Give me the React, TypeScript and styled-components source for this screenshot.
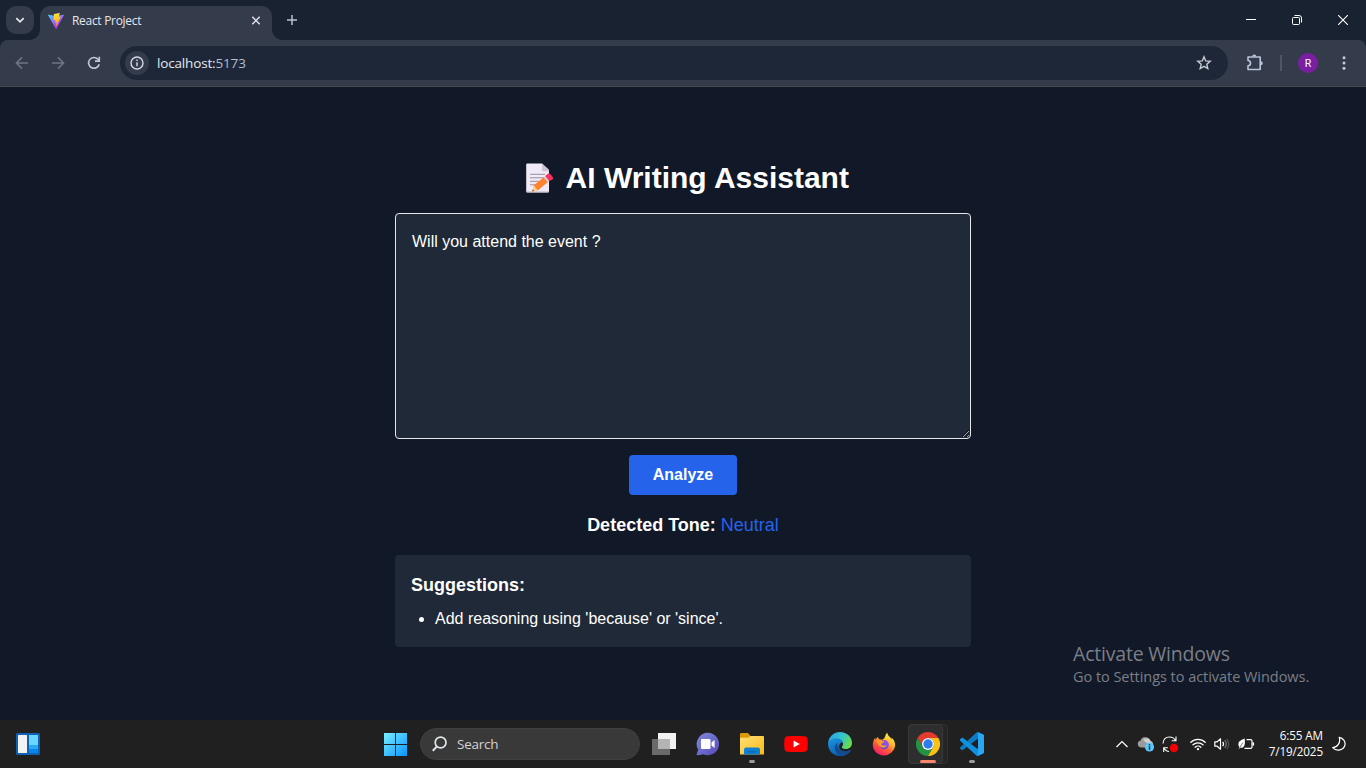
import React from "react";
import styled, { createGlobalStyle } from "styled-components";

const GlobalStyle = createGlobalStyle`
  * { box-sizing: border-box; }
  body { margin: 0; background: #111827; overflow: hidden; }
  svg { display: block; flex: none; }
`;

const ui = `"Open Sans", "Noto Sans", sans-serif`;
const sans = `"Liberation Sans", Arial, sans-serif`;

const Screen = styled.div`
  position: relative;
  display: flex;
  flex-direction: column;
  width: 1366px;
  height: 768px;
  font-family: ${ui};
`;

/* Browser frame */
const TabStrip = styled.header`
  display: flex;
  height: 40px;
  padding-left: 6px;
  background: #192230;
`;

const TabSearch = styled.button`
  display: grid;
  place-items: center;
  width: 28px;
  height: 28px;
  margin: 6px 6px 0 0;
  padding: 0;
  border: 0;
  border-radius: 10px;
  background: #343b4b;
`;

const Tab = styled.div`
  position: relative;
  display: flex;
  align-items: center;
  width: 232px;
  height: 34px;
  margin-top: 6px;
  padding: 0 10px 5px 8px;
  border-radius: 10px 10px 0 0;
  background: #343b4b;
  &::before,
  &::after {
    content: "";
    position: absolute;
    bottom: 0;
    width: 10px;
    height: 10px;
  }
  &::before {
    right: 100%;
    background: radial-gradient(circle at 0 0, transparent 9.5px, #343b4b 10px);
  }
  &::after {
    left: 100%;
    background: radial-gradient(circle at 100% 0, transparent 9.5px, #343b4b 10px);
  }
`;

const TabTitle = styled.span`
  flex: 1;
  margin-left: 8px;
  color: #e3e6ee;
  font-size: 12px;
  line-height: 16px;
  letter-spacing: -0.3px;
`;

const NewTab = styled.div`
  display: grid;
  place-items: center;
  width: 28px;
  margin-left: 6px;
`;

const WindowControls = styled.div`
  display: flex;
  margin-left: auto;
`;

const WindowButton = styled.div`
  display: grid;
  place-items: center;
  width: 46px;
  height: 40px;
`;

const ToolbarBack = styled.div`
  background: #192230;
`;

const Toolbar = styled.nav`
  display: flex;
  align-items: center;
  height: 47px;
  padding: 0 4px;
  border-bottom: 1px solid #484a50;
  border-radius: 8px 8px 0 0;
  background: #343b4b;
`;

const ToolButton = styled.div<{ $w?: number }>`
  display: grid;
  flex: none;
  place-items: center;
  width: ${(p) => p.$w ?? 36}px;
  height: 34px;
`;

const AddressBar = styled.div`
  display: flex;
  flex: none;
  align-items: center;
  width: 1108px;
  height: 34px;
  margin-left: 8px;
  padding: 0 16px 0 5px;
  border-radius: 17px;
  background: #1e2737;
`;

const SiteInfo = styled.div`
  display: grid;
  place-items: center;
  width: 24px;
  height: 24px;
  border-radius: 50%;
  background: #343b4b;
`;

const Address = styled.span`
  flex: 1;
  margin-left: 8px;
  color: #e6e8ee;
  font-size: 13.5px;
  letter-spacing: -0.16px;
`;

const Port = styled.span`
  color: #b4bccd;
`;

const Divider = styled.i`
  flex: none;
  width: 2px;
  height: 16px;
  margin-left: -2px;
  background: #4d5567;
`;

const Avatar = styled.div`
  display: grid;
  flex: none;
  place-items: center;
  width: 20px;
  height: 20px;
  margin: 0 8px 0 16px;
  border-radius: 50%;
  background: #7b1fa2;
  color: #fff;
  font: 400 10.5px Roboto, sans-serif;
`;

/* Web page */
const Page = styled.main`
  display: flex;
  flex: 1;
  flex-direction: column;
  align-items: center;
  padding-top: 73px;
  background: #111827;
  color: #fff;
  font-family: ${sans};
`;

const Title = styled.h1`
  display: flex;
  align-items: center;
  gap: 7.5px;
  margin: 0 0 17px;
  font-size: 30px;
  line-height: 36px;
`;

const Editor = styled.textarea`
  width: 576px;
  height: 226px;
  padding: 16px;
  border: 1px solid #e5e7eb;
  border-radius: 4px;
  outline: 0;
  background: #1f2937;
  color: #fff;
  font: 16px/24px ${sans};
`;

const AnalyzeButton = styled.button`
  width: 108px;
  height: 40px;
  margin-top: 16px;
  padding: 0;
  border: 0;
  border-radius: 4px;
  background: #2563eb;
  color: #fff;
  font: bold 16px/24px ${sans};
`;

const Tone = styled.p`
  margin: 16px 0;
  font-size: 18px;
  line-height: 28px;
`;

const ToneValue = styled.span`
  color: #2563eb;
`;

const Suggestions = styled.section`
  width: 576px;
  height: 92px;
  padding: 16px;
  border-radius: 4px;
  background: #1f2937;
`;

const SuggestionsTitle = styled.h2`
  margin: 0 0 8px;
  font-size: 18px;
  line-height: 28px;
`;

const SuggestionList = styled.ul`
  margin: 0;
  padding-left: 24px;
  font-size: 16px;
  line-height: 24px;
`;

const Watermark = styled.aside`
  position: absolute;
  top: 641px;
  left: 1073px;
  color: #7b7f87;
  white-space: nowrap;
`;

const WatermarkTitle = styled.div`
  font-size: 19.5px;
  line-height: 26px;
  letter-spacing: -0.2px;
`;

const WatermarkText = styled.div`
  font-size: 14.5px;
  line-height: 20px;
  letter-spacing: -0.04px;
`;

/* Taskbar */
const Taskbar = styled.footer`
  display: grid;
  grid-template-columns: 373px auto 1fr;
  height: 48px;
  background: #202020;
`;

const Widgets = styled.div`
  display: flex;
  align-items: center;
  padding-left: 16px;
`;

const AppRow = styled.div`
  display: flex;
`;

const AppSlot = styled.div`
  position: relative;
  display: grid;
  place-items: center;
  width: 44px;
  height: 48px;
  & > svg { position: relative; }
`;

const ActivePlate = styled.div`
  position: absolute;
  top: 4px;
  left: 2px;
  width: 35px;
  height: 40px;
  border: 1px solid #383838;
  border-radius: 4px;
  background: #2e2e2e;
`;

const StackedPlate = styled(ActivePlate)`
  width: 40px;
  border-color: #303030;
  background: #252525;
`;

const Indicator = styled.i<{ $active?: boolean }>`
  position: absolute;
  bottom: 5px;
  left: ${(p) => (p.$active ? 14 : 19)}px;
  width: ${(p) => (p.$active ? 16 : 6)}px;
  height: 3px;
  border-radius: 2px;
  background: ${(p) => (p.$active ? "#fa866b" : "#9b9b9b")};
`;

const SearchBox = styled.div`
  display: flex;
  align-items: center;
  width: 220px;
  height: 32px;
  margin: 8px 2px 0 3px;
  padding-left: 11px;
  border: 1px solid #404040;
  border-radius: 16px;
  background: #393939;
  color: #d2d2d2;
  font-size: 13.5px;
  letter-spacing: -0.25px;
  gap: 10px;
`;

const Tray = styled.div`
  display: flex;
  align-items: center;
  justify-content: flex-end;
  padding-right: 11px;
`;

const TrayIcon = styled.div<{ $w?: number; $gap?: number }>`
  display: grid;
  place-items: center;
  width: ${(p) => p.$w ?? 24}px;
  margin-left: ${(p) => p.$gap ?? 0}px;
`;

const Clock = styled.div`
  width: 65px;
  padding-bottom: 2px;
  color: #fff;
  font-size: 11.7px;
  line-height: 16px;
  letter-spacing: -0.12px;
  text-align: right;
  white-space: nowrap;
`;

const ViteLogo = () => (
  <svg width="16" height="16" viewBox="0 0 256 257">
    <defs>
      <linearGradient id="viteV" x1="0" x2=".58" y1="0" y2=".79">
        <stop stopColor="#41d1ff" />
        <stop offset="1" stopColor="#bd34fe" />
      </linearGradient>
      <linearGradient id="viteBolt" x1=".4" x2=".5" y1="0" y2=".9">
        <stop stopColor="#ffea83" />
        <stop offset=".1" stopColor="#ffdd35" />
        <stop offset="1" stopColor="#ffa800" />
      </linearGradient>
    </defs>
    <path fill="url(#viteV)" d="M255.153 37.938L134.897 252.976c-2.483 4.44-8.862 4.466-11.382.048L.875 37.958c-2.746-4.814 1.371-10.646 6.827-9.67l120.385 21.517a6.537 6.537 0 0 0 2.322-.004l117.867-21.483c5.438-.991 9.574 4.796 6.877 9.62Z" />
    <path fill="url(#viteBolt)" d="M185.432.063L96.44 17.501a3.268 3.268 0 0 0-2.634 3.014l-5.474 92.456a3.268 3.268 0 0 0 3.997 3.378l24.777-5.718c2.318-.535 4.413 1.507 3.936 3.838l-7.361 36.047c-.495 2.426 1.782 4.5 4.151 3.78l15.304-4.649c2.372-.72 4.652 1.36 4.15 3.788l-11.698 56.621c-.732 3.542 3.979 5.473 5.943 2.437l1.313-2.028l72.516-144.72c1.215-2.423-.88-5.186-3.54-4.672l-25.505 4.922c-2.396.462-4.435-1.77-3.759-4.114l16.646-57.705c.677-2.35-1.37-4.583-3.769-4.113Z" />
  </svg>
);

const Arrow = ({ flip }: { flip?: boolean }) => (
  <svg width="14" height="14" viewBox="0 0 14 14" fill="none" stroke="#6f7686" strokeWidth="1.5">
    <path d={flip ? "M1 7h11.5M7 1.4 12.6 7 7 12.6" : "M13 7H1.5M7 1.4 1.4 7 7 12.6"} />
  </svg>
);

const MemoEmoji = () => (
  <svg width="41" height="32" viewBox="0 0 41 32">
    <path d="M10.4 1.500h14.600L32 8v21.300a1.200 1.200 0 0 1-1.200 1.200H10.400a1.200 1.200 0 0 1-1.200-1.200V2.700a1.200 1.200 0 0 1 1.200-1.200Z" fill="#f0eaf6" />
    <path d="M25 1.500 32 8v1.300h-5.500A1.500 1.500 0 0 1 25 7.800Z" fill="#cdc2d9" />
    <path d="M9.200 29.500H32a1.200 1.200 0 0 1-1.200 1H10.300a1.200 1.200 0 0 1-1.100-1Z" fill="#b9b1c4" />
    <g stroke="#998ea4" strokeWidth="1">
      <path d="M13 12.300h15M13 15.800h14M13 19.300h9M13 22.800h6" />
    </g>
    <path d="m16.600 23.500 10.100-8.200 4 5-10.100 8.200Z" fill="#ff822d" />
    <path d="m16.600 23.500 4 5-5.300 1Z" fill="#ffce7c" />
    <path d="m15.800 27.500 1.200 1.600-1.700.400Z" fill="#4c2b3c" />
    <path d="m26.700 15.300 1.500-1.300 4 5-1.500 1.300Z" fill="#d3c9dc" />
    <path d="m28.200 14 2.700-2.200c.8-.6 1.800-.5 2.400.300l2.500 3.100c.6.800.4 1.700-.3 2.200L32.200 19Z" fill="#f8315f" />
  </svg>
);

const WidgetsIcon = () => (
  <svg width="24" height="22" viewBox="0 0 24 22">
    <rect width="24" height="22" rx="1.5" fill="#0f62b3" />
    <rect x="2" y="2" width="9" height="18" rx=".6" fill="#f2f2f2" />
    <path fill="#69d6ff" d="M13 2h9v10h-9z" />
    <path fill="#27a9f5" d="M13 12h9v4h-9z" />
    <path fill="#0786ef" d="M13 16h9v4h-9z" />
  </svg>
);

const StartIcon = () => (
  <svg width="24" height="24" viewBox="0 0 24 24">
    <linearGradient id="win" x1="0" y1="0" x2="24" y2="24" gradientUnits="userSpaceOnUse">
      <stop stopColor="#7df3ff" />
      <stop offset="1" stopColor="#0795ff" />
    </linearGradient>
    <path fill="url(#win)" d="M1 1h11v11H1zM13 1h11v11H13zM1 13h11v11H1zM13 13h11v11H13z" />
  </svg>
);

const SearchIcon = () => (
  <svg width="15" height="16" viewBox="0 0 15 16" fill="none" stroke="#e2e6e8" strokeWidth="1.700">
    <circle cx="8.600" cy="6.500" r="5.400" />
    <path d="M5 10.400.8 14.700" strokeWidth="2" />
  </svg>
);

const TaskViewIcon = () => (
  <svg width="24" height="24" viewBox="0 0 24 24">
    <path fill="#f2f2f2" d="M6 1h18v16H6z" />
    <path fill="#6a6a6a" d="M0 7h18v16H0z" />
    <path fill="#b4b4b4" d="M6 7h12v10H6z" />
  </svg>
);

const ChatIcon = () => (
  <svg width="24" height="24" viewBox="0 0 24 24">
    <linearGradient id="chat" x1="0" y1="0" x2="1" y2="1">
      <stop stopColor="#897bd6" />
      <stop offset=".35" stopColor="#6f78cf" />
      <stop offset="1" stopColor="#5b45bd" />
    </linearGradient>
    <path fill="url(#chat)" d="M12 .8a11.2 11.2 0 1 1-4.800 21.400c-1.700.5-3.800 1-5.900 1.100-.6 0-.9-.5-.7-1l1.600-4.600A11.200 11.200 0 0 1 12 .8Z" />
    <rect x="5" y="7" width="9.500" height="10" rx="1" fill="#fff" />
    <path d="m15.500 10.600 2.300-2.200c.4-.4.8-.2.8.3v6.600c0 .5-.4.7-.8.3L15.500 13.400Z" fill="#fff" />
  </svg>
);

const FolderIcon = () => (
  <svg width="24" height="24" viewBox="0 0 24 24">
    <linearGradient id="fold" x1="0" y1="0" x2="1" y2="1">
      <stop stopColor="#ffe07a" />
      <stop offset="1" stopColor="#fbb912" />
    </linearGradient>
    <path fill="#dd9a06" d="M0 2.500C0 1.700.5 1 1.300 1H8l2.500 3H22v6H0Z" />
    <path fill="url(#fold)" d="M0 5.800h8L10.500 4H23a1 1 0 0 1 1 1v17.500H0Z" />
    <path fill="#0e7fd3" d="M4 22.500v-4.800A2.200 2.200 0 0 1 6.200 15.500h11.600a2.200 2.200 0 0 1 2.200 2.200v4.800Z" />
    <path stroke="#0a68b4" strokeWidth="1.300" d="M7.500 19.800h9" />
  </svg>
);

const YouTubeIcon = () => (
  <svg width="24" height="24" viewBox="0 0 24 24">
    <path fill="#f00" d="M3.500 4.300c4.500-.5 12.500-.5 17 0 1.800.2 2.800 1.200 3 3 .4 3 .4 6.400 0 9.400-.2 1.800-1.200 2.800-3 3-4.500.5-12.500.5-17 0-1.800-.2-2.800-1.200-3-3-.4-3-.4-6.400 0-9.400.2-1.800 1.200-2.800 3-3Z" />
    <path fill="#fff" d="m9.600 8.500 6.200 3.500-6.200 3.500Z" />
  </svg>
);

const EdgeIcon = () => (
  <svg width="24" height="24" viewBox="0 0 24 24">
    <defs>
      <linearGradient id="edgeTop" x1="0" y1=".2" x2="1" y2=".6">
        <stop stopColor="#2da4e8" />
        <stop offset=".5" stopColor="#31c4cf" />
        <stop offset="1" stopColor="#69dd49" />
      </linearGradient>
      <linearGradient id="edgeBody" x1="0" y1="0" x2=".5" y2="1">
        <stop stopColor="#1b9ae1" />
        <stop offset="1" stopColor="#0a5cb0" />
      </linearGradient>
    </defs>
    <path fill="url(#edgeBody)" d="M.1 11C.7 7.300 4.300 5.500 8.200 5.500c4 0 7 2 7.200 5.200-4-1.200-7 5.500-1.200 8 3 1.300 6 .6 8-.7.500-.3.900.1.600.6A12 12 0 0 1 12 24C5 24-.5 18.500.1 11Z" />
    <path fill="#124c8c" d="M9.200 10.800c-4.500 3.200-2.500 12 4.600 13 3.700-.2 6.900-2.200 8.900-5 .3-.600-.1-1-.6-.700-2.400 1.300-5 1.700-7.700.8-4.800-1.600-5-5.700-5.200-8.100Z" />
    <path fill="url(#edgeTop)" d="M.1 11C.8 4.500 6 0 12 0c7 0 12 5 12 11 0 3.800-2.700 6-6 6-3.500 0-4.500-1.300-4.100-2 2.500-3.500 1-8.500-5.500-8.800C4 6 .9 8.200.1 11Z" />
  </svg>
);

const FirefoxIcon = () => (
  <svg width="24" height="24" viewBox="0 0 24 24">
    <defs>
      <linearGradient id="foxBody" x1=".8" y1=".05" x2=".25" y2="1">
        <stop stopColor="#fff44f" />
        <stop offset=".35" stopColor="#ffb52b" />
        <stop offset=".62" stopColor="#ff5b36" />
        <stop offset="1" stopColor="#f5156c" />
      </linearGradient>
      <linearGradient id="foxGlobe" x1="1" y1="0" x2="0" y2="1">
        <stop stopColor="#a557f5" />
        <stop offset="1" stopColor="#5746ce" />
      </linearGradient>
    </defs>
    <path fill="url(#foxBody)" d="M15.300.8c.2 2.300 1.700 3.300 3 4.700.9 1 1 1.200 1.300 1.900.2-.7.2-1.300 0-2 2.400 2 3.600 5 3.600 8A11.200 11.200 0 0 1 12 23.500C5.700 23.500.8 18.800.8 12.800c0-2.800 1-5.500 2.500-7.300v2.200L6 4.700c.1 1.300.6 2 1.300 2.600l3 .4c1.200-.6 2.100-1.700 2.700-3 .5-1.300 1-2.900 2.300-3.900Z" />
    <circle cx="12.200" cy="12.700" r="4.700" fill="url(#foxGlobe)" />
    <path fill="#ff9a29" d="M4 9.300c2-1.700 4-1.500 6-.3l2.300.4c-.3 1.200-1.500 1.500-2.700 2.100-.5 1 .2 1.700 1.200 2 1.500.4 2.300-.7 3.700.2-1 1.500-2.600 2.300-4.200 1.900-2.600-.6-4.200-2.800-6.300-6.300Z" />
  </svg>
);

const ChromeIcon = () => (
  <svg width="24" height="24" viewBox="0 0 48 48">
    <path fill="#e33b2e" d="M24 12H44.800A24 24 0 0 0 3.200 12L13.600 30A12 12 0 0 1 24 12Z" />
    <path fill="#229342" d="M13.600 30 3.200 12A24 24 0 0 0 24 48L34.400 30A12 12 0 0 1 13.600 30Z" />
    <path fill="#fbc116" d="M34.400 30 24 48A24 24 0 0 0 44.800 12H24A12 12 0 0 1 34.400 30Z" />
    <circle cx="24" cy="24" r="12" fill="#fff" />
    <circle cx="24" cy="24" r="9.400" fill="#2f7cf0" />
  </svg>
);

const CodeIcon = () => (
  <svg width="24" height="24" viewBox="0 0 24 24">
    <path fill="#0b7cc4" d="M23.150 2.587L18.210.21a1.494 1.494 0 0 0-1.705.29l-9.460 8.630-4.120-3.128a.999.999 0 0 0-1.276.057L.327 7.261A1 1 0 0 0 .326 8.740L3.899 12 .326 15.260a1 1 0 0 0 .001 1.479L1.650 17.940a.999.999 0 0 0 1.276.057l4.120-3.128 9.460 8.630a1.492 1.492 0 0 0 1.704.290l4.942-2.377A1.500 1.500 0 0 0 24 20.060V3.939a1.500 1.500 0 0 0-.850-1.352zm-5.146 14.861L10.826 12l7.178-5.448v10.896z" />
    <path fill="#2aa7f2" d="m18 .2 5.150 2.387A1.500 1.500 0 0 1 24 3.939V20.060a1.500 1.500 0 0 1-.850 1.352L18 23.800Z" />
    <path fill="#1190dc" d="m2.900 6 15.100 11.450V23.800c-.5.1-1.100-.1-1.500-.3L.3 8.700c-.4-.4-.4-1 0-1.400L1.650 6a1 1 0 0 1 1.250 0Z" />
  </svg>
);

const CloudIcon = () => (
  <svg width="18" height="16" viewBox="0 0 18 16">
    <path fill="#9b9b9b" d="M4 11.500a3.600 3.600 0 0 1-.4-7.100A5.300 5.300 0 0 1 13.600 5 3.400 3.400 0 0 1 14 11.500Z" />
    <path fill="#d0d0d0" d="M6 3.500a5.300 5.300 0 0 1 7.600 1.500 3.500 3.500 0 0 1 2 3.500L9 6.500Z" />
    <circle cx="12.500" cy="11" r="4.600" fill="#5ac8fa" />
    <path stroke="#173a52" strokeWidth="1.500" d="M12.500 10.300v3.400M12.500 8.100v1.300" />
  </svg>
);

const SyncIcon = () => (
  <svg width="18" height="18" viewBox="0 0 18 18" fill="none" stroke="#fff" strokeWidth="1.100">
    <path d="M2 8.500C2.300 4.500 5 2 8.500 2c2.600 0 4.800 1.300 6 3.500M15 1.500v4.200h-4.200M2.700 17v-4.200h4.200M2.700 12.800C4 15 5.500 16.500 8 16.500" />
    <circle cx="13" cy="13" r="4.200" fill="#f50000" stroke="none" />
  </svg>
);

const WifiIcon = () => (
  <svg width="16" height="14" viewBox="0 0 16 14" fill="none" stroke="#fff" strokeWidth="1.300" strokeLinecap="round">
    <path d="M.8 5.300a10.300 10.300 0 0 1 14.400 0M3 7.800a7.200 7.200 0 0 1 10 0M5.200 10.200a4 4 0 0 1 5.600 0" />
    <circle cx="8" cy="12.100" r="1.200" fill="#fff" stroke="none" />
  </svg>
);

const SpeakerIcon = () => (
  <svg width="16" height="14" viewBox="0 0 16 14" fill="none" stroke="#fff" strokeWidth="1.200" strokeLinejoin="round">
    <path d="M.8 4.800h2.400L6.500 1.800v10.400L3.200 9.200H.8Z" />
    <path d="M8.700 4.800c1 1.300 1 3.100 0 4.400" />
    <path d="M10.700 3.200c1.900 2.200 1.900 5.400 0 7.600" stroke="#777" />
    <path d="M12.700 1.800c2.700 3 2.700 7.400 0 10.400" stroke="#555" />
  </svg>
);

const BatteryIcon = () => (
  <svg width="18" height="12" viewBox="0 0 18 12" fill="none" stroke="#fff" strokeWidth="1.200">
    <path d="M9.500 1.700h4.300a1.200 1.200 0 0 1 1.200 1.200v6.200a1.200 1.200 0 0 1-1.200 1.200H7.500" />
    <path d="M16.300 4.400v3.200" strokeWidth="1.600" />
    <path d="M7.500.2C6.500 1.600 2.200 2 1.500 5.300c-.3 1.600.2 3 .9 3.700L1.500 11l1.800-1.200C6.800 10.400 8.900 7 7.500.2Z" fill="#fff" stroke="none" />
    <path d="m2.700 9.600 3.200-5" stroke="#202020" strokeWidth=".6" />
  </svg>
);

export default function App() {
  return (
    <Screen>
      <GlobalStyle />
      <TabStrip>
        <TabSearch>
          <svg width="10" height="10" viewBox="0 0 10 10" fill="none" stroke="#e3e6ee" strokeWidth="1.800">
            <path d="m1.300 3.200 3.700 3.600 3.700-3.600" />
          </svg>
        </TabSearch>
        <Tab>
          <ViteLogo />
          <TabTitle>React Project</TabTitle>
          <svg width="12" height="12" viewBox="0 0 12 12" stroke="#dfe2ea" strokeWidth="1.500">
            <path d="m2.300 1.800 7.400 7.400M9.700 1.800 2.300 9.200" />
          </svg>
        </Tab>
        <NewTab>
          <svg width="12" height="12" viewBox="0 0 12 12" stroke="#b9c1d3" strokeWidth="1.500">
            <path d="M6 1v10M1 6h10" />
          </svg>
        </NewTab>
        <WindowControls>
          <WindowButton>
            <svg width="10" height="10" viewBox="0 0 10 10" stroke="#fff">
              <path d="M0 4.500h10" />
            </svg>
          </WindowButton>
          <WindowButton>
            <svg width="10" height="10" viewBox="0 0 10 10" fill="none" stroke="#fff">
              <rect x=".5" y="2.500" width="7" height="7" rx="1" />
              <path d="M2.500.5H7A2.500 2.500 0 0 1 9.500 3v4.500" />
            </svg>
          </WindowButton>
          <WindowButton>
            <svg width="10" height="10" viewBox="0 0 10 10" stroke="#fff" strokeWidth="1.100">
              <path d="m0 0 10 10M10 0 0 10" />
            </svg>
          </WindowButton>
        </WindowControls>
      </TabStrip>

      <ToolbarBack>
        <Toolbar>
          <ToolButton><Arrow /></ToolButton>
          <ToolButton><Arrow flip /></ToolButton>
          <ToolButton>
            <svg width="14" height="14" viewBox="0 0 14 14" fill="none" stroke="#c3c9d8" strokeWidth="1.600">
              <path d="M12.200 8.200A5.400 5.400 0 1 1 11 3.300l1 1" />
              <path d="M12.300.8v4.300H8" />
            </svg>
          </ToolButton>
          <AddressBar>
            <SiteInfo>
              <svg width="14" height="14" viewBox="0 0 14 14" fill="none" stroke="#d5d9e4" strokeWidth="1.400">
                <circle cx="7" cy="7" r="6" />
                <path d="M7 6.300v4M7 3.600v1.500" />
              </svg>
            </SiteInfo>
            <Address>localhost:<Port>5173</Port></Address>
            <svg width="16" height="16" viewBox="0 0 16 16" fill="none" stroke="#c6cad3" strokeWidth="1.400">
              <path d="m8 1.800 1.700 4.100 4.500.4-3.400 2.900 1 4.400L8 11.300l-3.800 2.300 1-4.400-3.400-2.900 4.500-.4Z" />
            </svg>
          </AddressBar>
          <ToolButton $w={54}>
            <svg width="18" height="18" viewBox="0 0 18 18">
              <path fill="none" stroke="#b9c3da" strokeWidth="1.600" strokeLinejoin="round" d="M2 3h12.200v12.500H2v-3.700c3.300-.3 3.300-5 0-5.300Z" />
              <path fill="#b9c3da" d="M6.200 2.500a2 2 0 0 1 4 0ZM14.800 7.200a2 2 0 0 1 0 4Z" />
            </svg>
          </ToolButton>
          <Divider />
          <Avatar>R</Avatar>
          <ToolButton>
            <svg width="4" height="14" viewBox="0 0 4 14" fill="#c5ccdc">
              <circle cx="2" cy="1.700" r="1.500" />
              <circle cx="2" cy="7" r="1.500" />
              <circle cx="2" cy="12.300" r="1.500" />
            </svg>
          </ToolButton>
        </Toolbar>
      </ToolbarBack>

      <Page>
        <Title><MemoEmoji />AI Writing Assistant</Title>
        <Editor defaultValue="Will you attend the event ?" spellCheck={false} />
        <AnalyzeButton>Analyze</AnalyzeButton>
        <Tone><b>Detected Tone:</b> <ToneValue>Neutral</ToneValue></Tone>
        <Suggestions>
          <SuggestionsTitle>Suggestions:</SuggestionsTitle>
          <SuggestionList>
            <li>Add reasoning using 'because' or 'since'.</li>
          </SuggestionList>
        </Suggestions>
      </Page>

      <Watermark>
        <WatermarkTitle>Activate Windows</WatermarkTitle>
        <WatermarkText>Go to Settings to activate Windows.</WatermarkText>
      </Watermark>

      <Taskbar>
        <Widgets><WidgetsIcon /></Widgets>
        <AppRow>
          <AppSlot><StartIcon /></AppSlot>
          <SearchBox><SearchIcon />Search</SearchBox>
          <AppSlot><TaskViewIcon /></AppSlot>
          <AppSlot><ChatIcon /></AppSlot>
          <AppSlot><FolderIcon /><Indicator /></AppSlot>
          <AppSlot><YouTubeIcon /></AppSlot>
          <AppSlot><EdgeIcon /></AppSlot>
          <AppSlot><FirefoxIcon /></AppSlot>
          <AppSlot>
            <StackedPlate />
            <ActivePlate />
            <ChromeIcon />
            <Indicator $active />
          </AppSlot>
          <AppSlot><CodeIcon /><Indicator /></AppSlot>
        </AppRow>
        <Tray>
          <TrayIcon>
            <svg width="12" height="8" viewBox="0 0 12 8" fill="none" stroke="#fff" strokeWidth="1.200">
              <path d="m.5 7 5.500-5.500L11.500 7" />
            </svg>
          </TrayIcon>
          <TrayIcon><CloudIcon /></TrayIcon>
          <TrayIcon><SyncIcon /></TrayIcon>
          <TrayIcon $gap={4}><WifiIcon /></TrayIcon>
          <TrayIcon><SpeakerIcon /></TrayIcon>
          <TrayIcon><BatteryIcon /></TrayIcon>
          <Clock>6:55 AM<br />7/19/2025</Clock>
          <TrayIcon $w={32}>
            <svg width="14" height="16" viewBox="0 0 14 16" fill="none" stroke="#fff" strokeWidth="1.200" strokeLinejoin="round">
              <path d="M7.200 1.300c4 .7 6.500 4.200 5.700 7.800-1.200 5-8.200 7-12.200 2.600 4.700-.3 8.200-4.900 6.500-10.400Z" />
            </svg>
          </TrayIcon>
        </Tray>
      </Taskbar>
    </Screen>
  );
}
